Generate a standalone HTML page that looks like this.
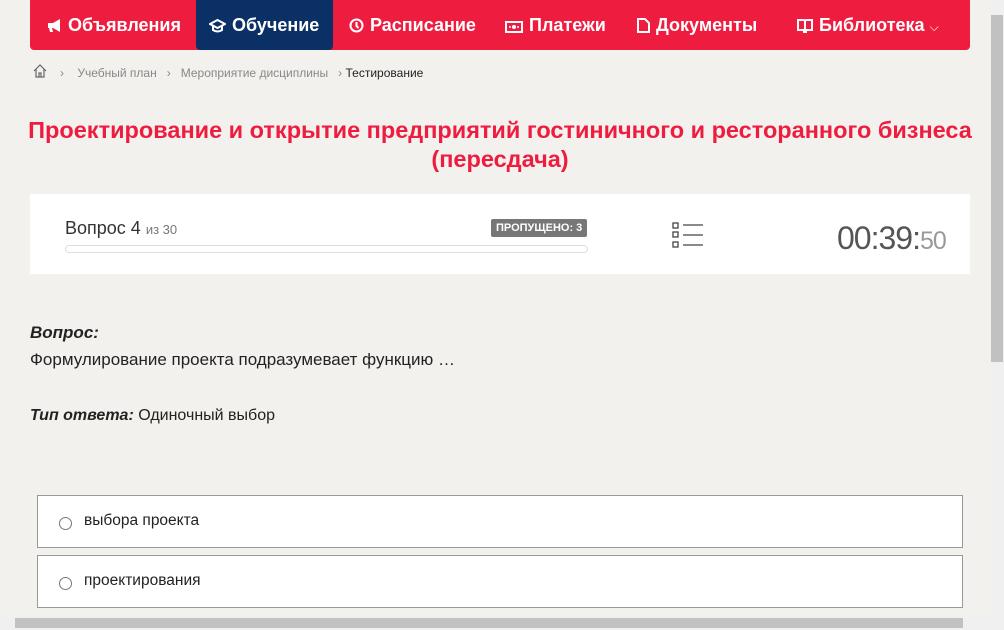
<!DOCTYPE html>
<html><head><meta charset="utf-8"><style>
body{margin:0;width:1004px;height:630px;overflow:hidden;background:#f2f1ee;font-family:"Liberation Sans",sans-serif;position:relative}
.nav{position:absolute;left:30px;top:0;width:940px;height:50px;background:#ee1d40;border-radius:0 0 4px 4px}
.nav div{position:absolute;top:0;height:50px;line-height:50px;color:#fff;font-size:18px;font-weight:bold;white-space:nowrap}
.nav svg{vertical-align:-2px;margin-right:6px}
.nav .act{background:#0b3066;border-radius:0 0 4px 4px}
.bc{position:absolute;top:66px;font-size:12px;color:#888}
h1{position:absolute;left:20px;top:116px;width:960px;margin:0;text-align:center;color:#ee1d40;font-size:23.5px;line-height:29px;font-weight:bold}
.card{position:absolute;left:30px;top:194px;width:940px;height:80px;background:#fff}
.opt{position:absolute;left:37px;width:924px;height:51px;border:1px solid #999;background:#fff;font-size:15.5px;color:#222}
.opt span{position:absolute;left:46px;top:16px}
.opt i{position:absolute;left:21px;top:21px;width:11px;height:11px;border:1px solid #777;border-radius:50%}
</style></head><body>
<div class="nav">
<div style="left:17px"><svg width="15" height="14" fill="#fff"><path d="M1 4h5l7-4v13l-7-4H5l1 4H3L2 9H1z"/></svg>Объявления</div>
<div class="act" style="left:166px;width:137px;padding-left:13px;box-sizing:border-box"><svg width="17" height="14" fill="none" stroke="#fff" stroke-width="2"><path d="M1 5l7.5-4 7.5 4-7.5 4zM4 7v4c3 2 6 2 9 0V7"/></svg>Обучение</div>
<div style="left:319px"><svg width="15" height="15" fill="none" stroke="#fff" stroke-width="2"><circle cx="7.5" cy="7.5" r="6"/><path d="M7.5 4v4l2 2"/></svg>Расписание</div>
<div style="left:475px"><svg width="18" height="12" fill="#fff"><path d="M0 0h18v12H0z M2 2v8h14V2z"/><circle cx="9" cy="6" r="2"/><circle cx="5" cy="6" r="1"/><circle cx="13" cy="6" r="1"/></svg>Платежи</div>
<div style="left:607px"><svg width="13" height="15" fill="none" stroke="#fff" stroke-width="2"><path d="M1 1h7l4 4v9H1z"/></svg>Документы</div>
<div style="left:767px"><svg width="16" height="14" fill="none" stroke="#fff" stroke-width="2"><path d="M1 1h6l1 1 1-1h6v10H9v2H7v-2H1zM8 2v10"/></svg>Библиотека <span style="font-size:12px;font-weight:normal">⌵</span></div>
</div>
<svg style="position:absolute;left:33px;top:64px" width="14" height="14" fill="none" stroke="#666" stroke-width="1.2"><path d="M1 7l6-6 6 6M3 5v8h8V5M6 13V9h2v4"/></svg>
<div class="bc" style="left:60px">›&nbsp;&nbsp;&nbsp; Учебный план &nbsp;&nbsp;›&nbsp;&nbsp; Мероприятие дисциплины &nbsp;&nbsp;›<span style="color:#222"> Тестирование</span></div>
<h1>Проектирование и открытие предприятий гостиничного и ресторанного бизнеса<br>(пересдача)</h1>
<div class="card">
<div style="position:absolute;left:35px;top:24px;font-size:18px;color:#333">Вопрос 4 <span style="font-size:13px;color:#777">из 30</span></div>
<div style="position:absolute;left:461px;top:25px;background:#777;color:#fff;font-size:11px;font-weight:bold;padding:3px 5px;border-radius:2px">ПРОПУЩЕНО: 3</div>
<div style="position:absolute;left:35px;top:51px;width:521px;height:6px;border:1px solid #ddd;border-radius:4px"></div>
<svg style="position:absolute;left:642px;top:28px" width="32" height="28" fill="none" stroke="#444" stroke-width="1.3"><rect x="1" y="1" width="5" height="5"/><rect x="1" y="10" width="5" height="5"/><rect x="1" y="20" width="5" height="5"/><path d="M11 3h20M11 13h20M11 23h20"/></svg>
<div style="position:absolute;left:807px;top:26px;font-size:32px;color:#555;letter-spacing:-1px">00:39:<span style="font-size:25px;color:#999">50</span></div>
</div>
<div style="position:absolute;left:30px;top:319px;font-size:17px;color:#222;line-height:27px"><b><i>Вопрос:</i></b><br>Формулирование проекта подразумевает функцию …</div>
<div style="position:absolute;left:30px;top:407px;font-size:16px;color:#222"><b><i>Тип ответа:</i></b> Одиночный выбор</div>
<div class="opt" style="top:495px"><i></i><span>выбора проекта</span></div>
<div class="opt" style="top:555px"><i></i><span>проектирования</span></div>
<div style="position:absolute;left:990px;top:0;width:14px;height:630px;background:#f0f0f0"></div>
<div style="position:absolute;left:991px;top:15px;width:12px;height:347px;background:#c1c1c1"></div>
<div style="position:absolute;left:0;top:616px;width:990px;height:14px;background:#f0f0f0"></div>
<div style="position:absolute;left:15px;top:618px;width:948px;height:10px;background:#c1c1c1"></div>
</body></html>
